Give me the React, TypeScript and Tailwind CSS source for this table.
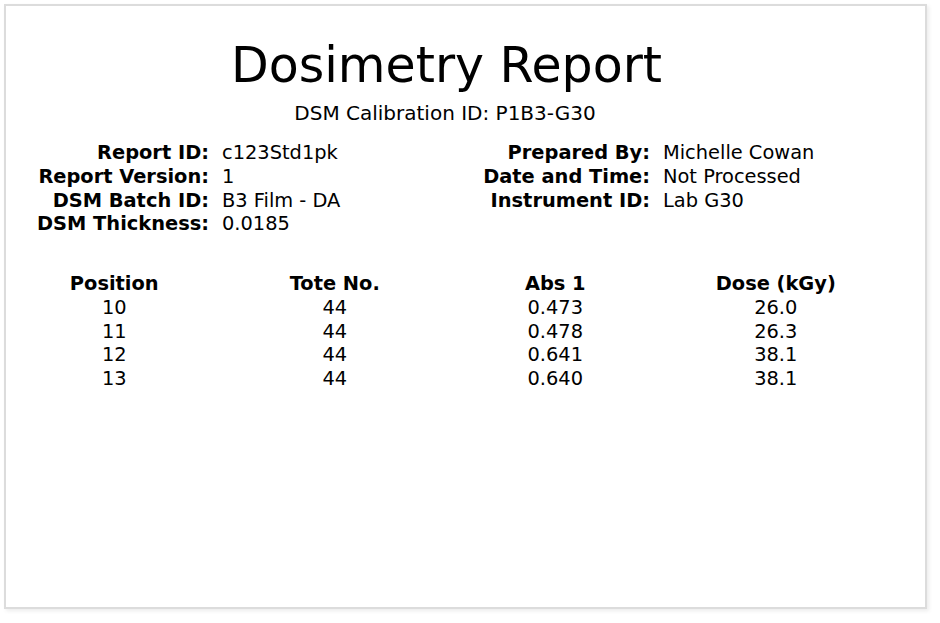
import React from 'react';

const info = {
  left: [
    ['Report ID:', 'c123Std1pk'],
    ['Report Version:', '1'],
    ['DSM Batch ID:', 'B3 Film - DA'],
    ['DSM Thickness:', '0.0185'],
  ],
  right: [
    ['Prepared By:', 'Michelle Cowan'],
    ['Date and Time:', 'Not Processed'],
    ['Instrument ID:', 'Lab G30'],
  ],
};

const rows = [
  ['10', '44', '0.473', '26.0'],
  ['11', '44', '0.478', '26.3'],
  ['12', '44', '0.641', '38.1'],
  ['13', '44', '0.640', '38.1'],
];

function InfoBlock({ items, labelWidth }: { items: string[][]; labelWidth: string }) {
  return (
    <div className="flex flex-col">
      {items.map(([label, value]) => (
        <div key={label} className="flex leading-[23.75px]">
          <div className={`${labelWidth} text-right font-bold`}>{label}</div>
          <div className="pl-[13px]">{value}</div>
        </div>
      ))}
    </div>
  );
}

export default function App() {
  return (
    <div className="w-[940px] h-[623px] bg-white p-[4px] text-black" style={{ fontFamily: '"DejaVu Sans", Verdana, sans-serif' }}>
      <div className="w-[923px] h-[605px] border-2 border-[#dcdcdc] shadow-[2px_2px_4px_rgba(0,0,0,0.08)] pt-[32px] text-[19.4px]">
        {/* Header */}
        <h1 className="text-center text-[49px] leading-[56px] pr-[38px]">Dosimetry Report</h1>
        <p className="text-center text-[20px] leading-[24px] mt-[7px] pr-[41px]">DSM Calibration ID: P1B3-G30</p>

        {/* Report info */}
        <div className="flex mt-[16px]">
          <div className="w-[460px]">
            <InfoBlock items={info.left} labelWidth="w-[203px]" />
          </div>
          <InfoBlock items={info.right} labelWidth="w-[184px]" />
        </div>

        {/* Readings */}
        <div className="mt-[36px] -ml-[2px] grid grid-cols-[repeat(4,220.5px)] text-center leading-[23.75px]">
          <div className="font-bold">Position</div>
          <div className="font-bold">Tote No.</div>
          <div className="font-bold">Abs 1</div>
          <div className="font-bold">Dose (kGy)</div>
          {rows.map((r) =>
            r.map((cell, i) => <div key={r[0] + '-' + i}>{cell}</div>)
          )}
        </div>
      </div>
    </div>
  );
}
